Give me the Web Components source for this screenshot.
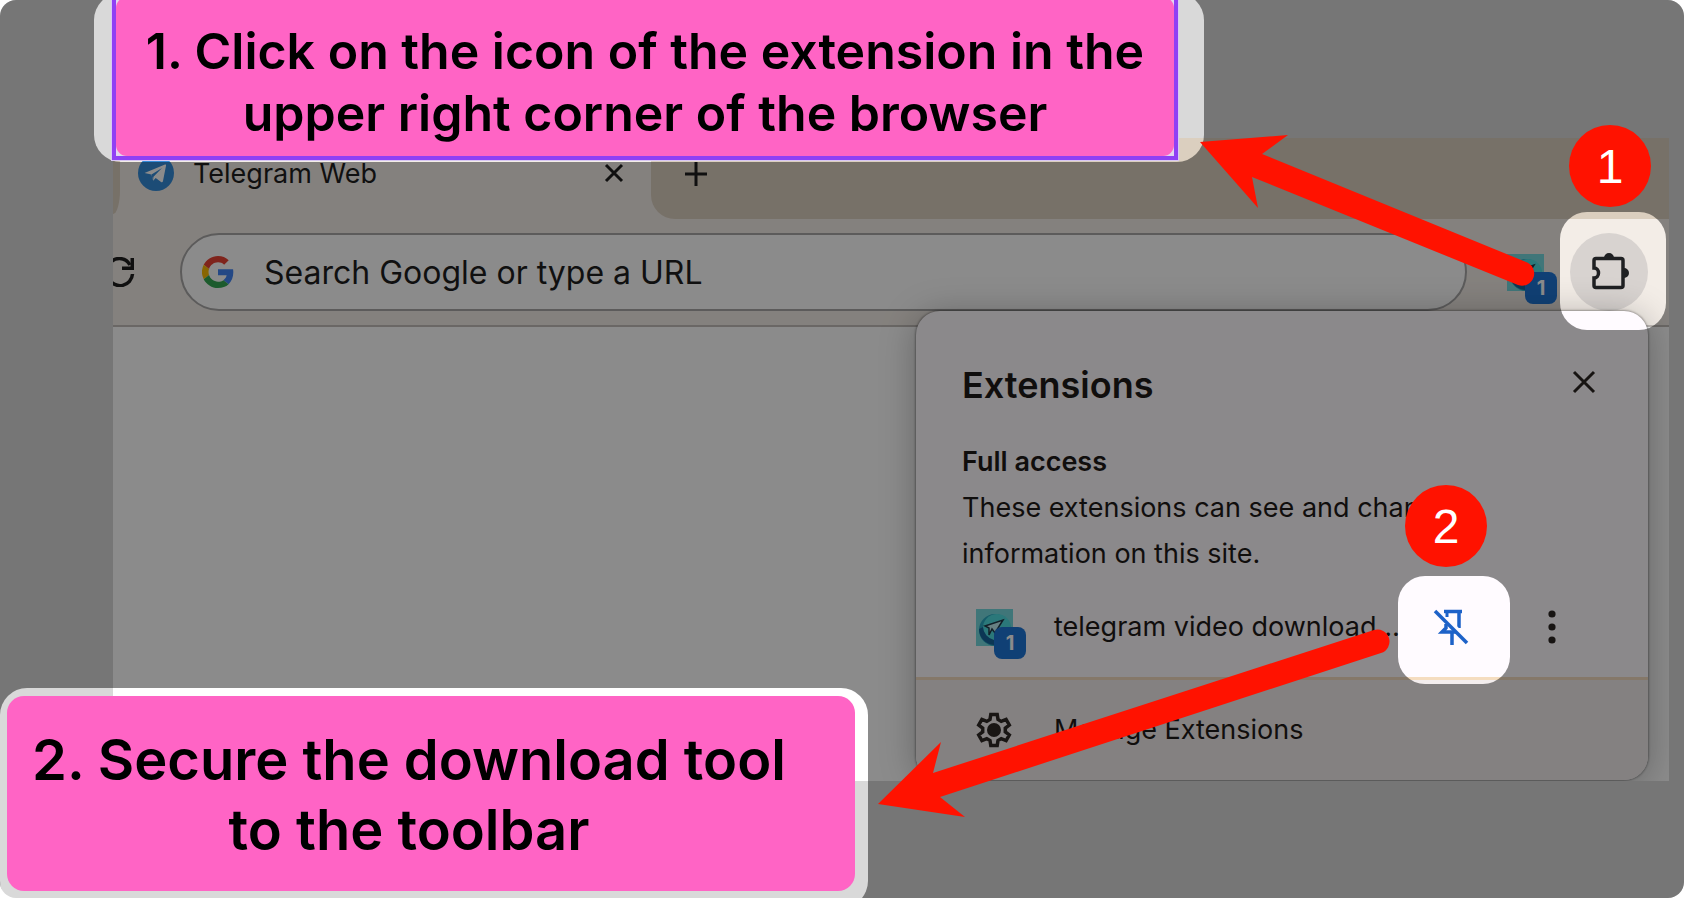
<!DOCTYPE html>
<html lang="en">
<head>
<meta charset="utf-8">
<title>Pin the extension</title>
<style>
  body {
    margin: 0;
    background: #fff;
    font-family: Inter, "Liberation Sans", sans-serif;
    color: #1f1f1f;
  }
</style>
</head>
<body>
<guide-stage>
  <browser-window>
    <browser-tab slot="tab">Telegram Web</browser-tab>
    <browser-toolbar slot="toolbar"></browser-toolbar>
    <extensions-panel slot="menu"></extensions-panel>
  </browser-window>

  <dim-layer slot="over"></dim-layer>
  <guide-callout slot="over" class="first" selected>1. Click on the icon of the extension in the upper right corner of the browser</guide-callout>
  <guide-callout slot="over" class="second">2. Secure the download tool to the toolbar</guide-callout>
  <guide-arrows slot="over"></guide-arrows>
  <step-badge slot="over" class="one">1</step-badge>
  <step-badge slot="over" class="two">2</step-badge>
</guide-stage>

<script>
class GuideStage extends HTMLElement {
  constructor() {
    super();
    this.attachShadow({ mode: "open" }).innerHTML = `
      <style>
        :host {
          display: flex;
          flex-direction: column;
          position: relative;
          box-sizing: border-box;
          min-height: 100vh;
          padding: 138px 15px 117px 113px;
          background: #d9d9d9;
          border-radius: 16px;
          overflow: hidden;
        }
        ::slotted([slot=over]) { position: absolute; }
        ::slotted(dim-layer), ::slotted(guide-arrows) { inset: 0; }
        ::slotted(.first) { left: 112px; top: -7px; width: 1066px; }
        ::slotted(.second) { left: 7px; top: 696px; width: 848px; }
        ::slotted(.one) { left: 1569px; top: 125px; }
        ::slotted(.two) { left: 1405px; top: 485px; }
      </style>
      <slot></slot>
      <slot name="over"></slot>
    `;
  }
}
customElements.define("guide-stage", GuideStage);

class BrowserWindow extends HTMLElement {
  constructor() {
    super();
    this.attachShadow({ mode: "open" }).innerHTML = `
      <style>
        :host {
          display: flex;
          flex-direction: column;
          flex: 1;
          position: relative;
          background: #fff;
          overflow: hidden;
        }
        .strip {
          display: flex;
          height: 81px;
          background: #f3ede7;
        }
        .before {
          width: 7px;
          height: 76px;
          background: #dbcfbf;
          border-bottom-right-radius: 7px 24px;
        }
        .tab { width: 531px; }
        .after {
          flex: 1;
          display: flex;
          background: #dbcfbf;
          border-bottom-left-radius: 24px;
        }
        button {
          height: 72px;
          padding: 0 30px;
          border: 0;
          background: none;
        }
        svg { display: block; }
        ::slotted([slot=menu]) {
          position: absolute;
          top: 173px;
          right: 21px;
        }
      </style>
      <div class="strip">
        <div class="before"></div>
        <div class="tab"><slot name="tab"></slot></div>
        <div class="after">
          <button aria-label="New tab">
            <svg width="32" height="24" viewBox="0 0 32 24"><path d="M15 0v24M4 12h22" stroke="#1f1f1f" stroke-width="3"/></svg>
          </button>
        </div>
      </div>
      <slot name="toolbar"></slot>
      <slot name="menu"></slot>
    `;
  }
}
customElements.define("browser-window", BrowserWindow);

class BrowserTab extends HTMLElement {
  constructor() {
    super();
    this.attachShadow({ mode: "open" }).innerHTML = `
      <style>
        :host {
          display: flex;
          align-items: center;
          height: 70px;
          padding: 0 25px 0 18px;
          font-size: 27px;
        }
        .title { flex: 1; padding-left: 19px; }
        button { padding: 0; border: 0; background: none; }
        svg { display: block; }
      </style>
      <svg width="36" height="36" viewBox="0 0 36 36">
        <circle cx="18" cy="18" r="18" fill="#348bd8"/>
        <path d="M6.500 18 27 9.500q1.500-.5 1 1.200L25 26q-.5 2-2.300.7l-5-3.800-2.600 2.800-1.700-6.200z" fill="#fff"/>
        <path d="M13.500 19.500 24 13l-8.500 8.800-.5 3.800z" fill="#348bd8"/>
      </svg>
      <span class="title"><slot></slot></span>
      <button aria-label="Close tab">
        <svg width="24" height="24" viewBox="0 0 24 24"><path d="m4 4 16 16M20 4 4 20" stroke="#1f1f1f" stroke-width="3"/></svg>
      </button>
    `;
  }
}
customElements.define("browser-tab", BrowserTab);

class ExtensionIcon extends HTMLElement {
  constructor() {
    super();
    this.attachShadow({ mode: "open" }).innerHTML = `
      <style>
        :host { display: block; position: relative; width: 37px; height: 37px; }
        svg { display: block; }
        span {
          position: absolute;
          left: 18px;
          top: 18px;
          width: 32px;
          height: 32px;
          border-radius: 8px;
          background: #1f76d6;
          color: #fff;
          font-size: 20px;
          font-weight: 700;
          line-height: 32px;
          text-align: center;
        }
      </style>
      <svg width="37" height="37" viewBox="0 0 37 37">
        <path d="M0 0h37v37H0z" fill="#76d9de"/>
        <circle cx="19" cy="21" r="16" fill="#2ba8c0"/>
        <circle cx="21" cy="19" r="14" fill="#4fdce0"/>
        <path d="M3 20a16 16 0 0 0 15 16v-5A14 14 0 0 1 7 18z" fill="#16659c"/>
        <path d="m9 17 18-6-8 13-3-4-3 6v-7z" fill="#bdebf0" stroke="#213b4c" stroke-width="1.500"/>
      </svg>
      <span>1</span>
    `;
  }
}
customElements.define("extension-icon", ExtensionIcon);

class BrowserToolbar extends HTMLElement {
  constructor() {
    super();
    this.attachShadow({ mode: "open" }).innerHTML = `
      <style>
        :host {
          display: flex;
          align-items: center;
          box-sizing: border-box;
          height: 108px;
          padding: 0 21px 0 0;
          background: #f3ede7;
          border-bottom: 2px solid #c2bdb9;
        }
        svg { display: block; }
        button { padding: 0; border: 0; background: none; }
        .reload { width: 22px; margin-right: 45px; }
        label {
          flex: 1;
          display: flex;
          align-items: center;
          gap: 30px;
          box-sizing: border-box;
          height: 78px;
          padding: 0 20px;
          border: 2px solid #a9a8a8;
          border-radius: 39px;
          background: #fff;
        }
        input {
          flex: 1;
          min-width: 0;
          padding: 0;
          border: 0;
          outline: 0;
          background: none;
          font: 32px Inter, sans-serif;
        }
        input::placeholder { color: #1f1f1f; opacity: 1; }
        extension-icon { margin: 0 26px 0 40px; }
        .puzzle {
          display: grid;
          place-items: center;
          width: 78px;
          height: 78px;
          border-radius: 50%;
          background: #d8d3d0;
        }
      </style>
      <button class="reload" aria-label="Reload">
        <svg width="22" height="30" viewBox="0 0 22 30">
          <path d="M-4 7.500A12 12 0 0 1 17 8M19.500 17A12.500 12.500 0 0 1-4 22" fill="none" stroke="#1f1f1f" stroke-width="3.500"/>
          <path d="M21 1v12H9v-3.500h8.500V1z" fill="#1f1f1f"/>
        </svg>
      </button>
      <label>
        <svg width="32" height="32" viewBox="0 0 48 48" aria-label="Google">
          <path fill="#ea4335" d="M24 9.500c3.540 0 6.710 1.220 9.210 3.600l6.850-6.850C35.900 2.380 30.470 0 24 0 14.620 0 6.510 5.380 2.560 13.220l7.980 6.190C12.430 13.720 17.740 9.500 24 9.500z"/>
          <path fill="#4285f4" d="M46.980 24.550c0-1.570-.15-3.090-.38-4.550H24v9.020h12.940c-.58 2.960-2.260 5.480-4.780 7.180l7.730 6c4.510-4.180 7.090-10.360 7.090-17.650z"/>
          <path fill="#fbbc05" d="M10.530 28.590a14.500 14.500 0 0 1 0-9.180l-7.980-6.190a24 24 0 0 0 0 21.560z"/>
          <path fill="#34a853" d="M24 48c6.480 0 11.930-2.130 15.890-5.810l-7.730-6c-2.150 1.450-4.920 2.300-8.160 2.300-6.260 0-11.570-4.220-13.470-9.910l-7.980 6.190C6.510 42.620 14.620 48 24 48z"/>
        </svg>
        <input type="text" aria-label="Address bar" placeholder="Search Google or type a URL">
      </label>
      <extension-icon></extension-icon>
      <button class="puzzle" aria-label="Extensions">
        <svg width="42" height="42" viewBox="0 0 42 42">
          <path d="M8 7.500h25q2 0 2 2v25q0 2-2 2H8q-2 0-2-2V27c6 0 6-10 0-10V9.500q0-2 2-2z" fill="none" stroke="#1f2022" stroke-width="3.500"/>
          <path d="M16 7a5 5 0 0 1 10 0zM36 17a5 5 0 0 1 0 10z" fill="#1f2022"/>
        </svg>
      </button>
    `;
  }
}
customElements.define("browser-toolbar", BrowserToolbar);

class ExtensionsPanel extends HTMLElement {
  constructor() {
    super();
    this.attachShadow({ mode: "open" }).innerHTML = `
      <style>
        :host {
          display: block;
          width: 732px;
          border-radius: 24px;
          overflow: hidden;
          background: #fffbff;
          box-shadow: 0 0 2px 1px rgba(0, 0, 0, .3), 0 4px 36px rgba(0, 0, 0, .28);
          color: #1f1a18;
          font-size: 27px;
          line-height: 46px;
        }
        header {
          display: flex;
          align-items: flex-start;
          justify-content: space-between;
          padding: 48px 52px 0 46px;
        }
        h1, h2, p { margin: 0; }
        h1 { font-size: 36px; font-weight: 600; line-height: 52px; }
        h2 { font-size: 27px; font-weight: 600; }
        svg { display: block; }
        button { padding: 0; border: 0; background: none; }
        header button { padding-top: 11px; }
        .access { padding: 28px 120px 0 46px; }
        .row {
          display: flex;
          align-items: center;
          height: 100px;
          padding: 0 92px 0 60px;
        }
        .name { padding-left: 41px; }
        .pin { margin-left: auto; margin-right: 79px; }
        .manage {
          display: flex;
          align-items: center;
          gap: 42px;
          box-sizing: border-box;
          width: 100%;
          height: 103px;
          padding: 0 60px 0 60px;
          border-top: 3px solid #f5ddc0;
          background: #f3eded;
          color: inherit;
          font: inherit;
        }
      </style>
      <header>
        <h1>Extensions</h1>
        <button aria-label="Close">
          <svg width="24" height="24" viewBox="0 0 24 24"><path d="m2 2 20 20M22 2 2 22" stroke="#2b2522" stroke-width="3"/></svg>
        </button>
      </header>
      <div class="access">
        <h2>Full access</h2>
        <p>These extensions can see and change information on this site.</p>
      </div>
      <div class="row">
        <extension-icon></extension-icon>
        <span class="name">telegram video download…</span>
        <button class="pin" aria-label="Pin">
          <svg width="36" height="38" viewBox="0 0 36 38">
            <path d="M11 3.500h18M26 4v16M13 16v4l-4 4h14M19 24v13" fill="none" stroke="#1d62c8" stroke-width="3.500"/>
            <path d="m4 1 32 32" stroke="#fffbff" stroke-width="4"/>
            <path d="M14 4v5" stroke="#1d62c8" stroke-width="3"/>
            <path d="m2 3 32 32" stroke="#1d62c8" stroke-width="3.500"/>
          </svg>
        </button>
        <button aria-label="More actions">
          <svg width="8" height="34" viewBox="0 0 8 34" fill="#2b2522"><circle cx="4" cy="4" r="3.600"/><circle cx="4" cy="17" r="3.600"/><circle cx="4" cy="30" r="3.600"/></svg>
        </button>
      </div>
      <button class="manage">
        <svg width="36" height="38" viewBox="0 0 36 38">
          <path d="M14.800 2.500h6.400l.8 5 3.200 1.900 4.900-2 3.200 5.600-4 3.200v3.600l4 3.200-3.200 5.600-4.900-2-3.200 1.900-.8 5h-6.400l-.8-5-3.200-1.900-4.900 2L2.700 23l4-3.200v-3.600l-4-3.200 3.200-5.600 4.900 2L14 7.500z" transform="translate(0 1)" fill="none" stroke="#2f2925" stroke-width="3.500"/>
          <circle cx="18" cy="19" r="7" fill="#2f2925"/>
        </svg>
        <span>Manage Extensions</span>
      </button>
    `;
  }
}
customElements.define("extensions-panel", ExtensionsPanel);

// dark sheet with the highlighted areas cut out of it
class DimLayer extends HTMLElement {
  constructor() {
    super();
    this.attachShadow({ mode: "open" }).innerHTML = `
      <style>
        :host { display: block; pointer-events: none; }
        svg { display: block; width: 100%; height: 100%; }
      </style>
      <svg>
        <mask id="spots">
          <rect width="100%" height="100%" fill="#fff"/>
          <rect x="94" y="-7" width="1110" height="169" rx="27"/>
          <rect x="0" y="688" width="868" height="220" rx="27"/>
          <rect x="1560" y="212" width="106" height="118" rx="27"/>
          <rect x="1398" y="576" width="112" height="108" rx="27"/>
        </mask>
        <rect width="100%" height="100%" fill="#000" fill-opacity=".455" mask="url(#spots)"/>
      </svg>
    `;
  }
}
customElements.define("dim-layer", DimLayer);

class GuideCallout extends HTMLElement {
  constructor() {
    super();
    this.attachShadow({ mode: "open" }).innerHTML = `
      <style>
        :host {
          display: block;
          box-sizing: border-box;
          color: #000;
          font-weight: 600;
          text-align: center;
        }
        p {
          margin: 0;
          padding: 29px 54px 26px 10px;
          border-radius: 17px;
          background: #ff64c5;
          font-size: 56px;
          line-height: 70px;
        }
        :host([selected]) {
          border: 4px solid #9040f4;
          background: #e2d6ee;
          box-shadow: 0 0 0 1px #d9c8f5;
        }
        :host([selected]) p {
          padding: 23px 20px 12px;
          border-radius: 11px;
          font-size: 50px;
          line-height: 62px;
        }
      </style>
      <p><slot></slot></p>
    `;
  }
}
customElements.define("guide-callout", GuideCallout);

class GuideArrows extends HTMLElement {
  constructor() {
    super();
    this.attachShadow({ mode: "open" }).innerHTML = `
      <style>
        :host { display: block; pointer-events: none; }
        svg { display: block; width: 100%; height: 100%; fill: #ff1200; }
      </style>
      <svg>
        <path d="M1200 142 1288 135 1262 154 1526 262A12 12 0 0 1 1518 285L1252 177 1258 208z"/>
        <path d="M878 804 941 742 933 773 1374 630A12 12 0 0 1 1381 653L940 797 965 817z"/>
      </svg>
    `;
  }
}
customElements.define("guide-arrows", GuideArrows);

class StepBadge extends HTMLElement {
  constructor() {
    super();
    this.attachShadow({ mode: "open" }).innerHTML = `
      <style>
        :host {
          display: block;
          width: 82px;
          height: 82px;
          border-radius: 50%;
          background: #ff1200;
          color: #fff;
          font: 48px/84px "Liberation Sans", Arial, sans-serif;
          text-align: center;
        }
      </style>
      <slot></slot>
    `;
  }
}
customElements.define("step-badge", StepBadge);
</script>
</body>
</html>
